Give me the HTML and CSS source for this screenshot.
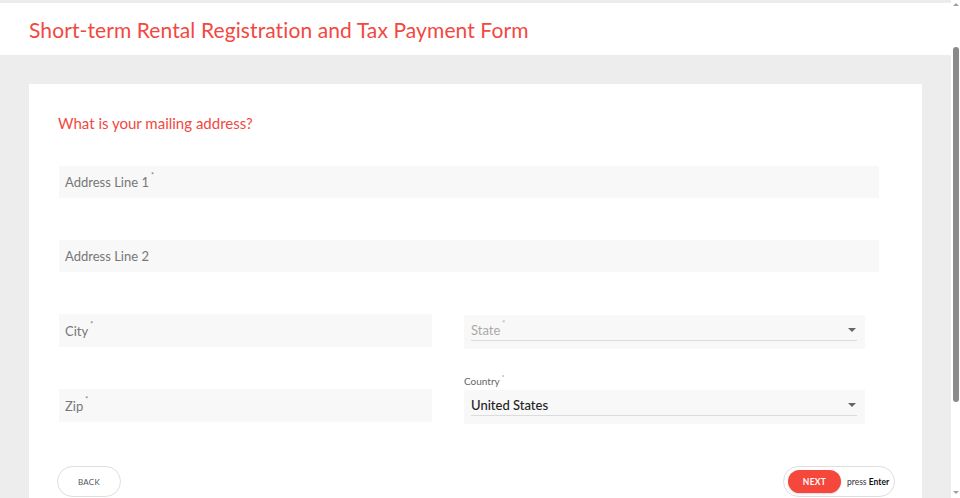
FILE: index.html
```html
<!DOCTYPE html>
<html>
<head>
<meta charset="utf-8">
<title>Short-term Rental Registration and Tax Payment Form</title>
<link rel="stylesheet" href="styles.css">
</head>
<body>
<div class="window">
  <div class="page">
    <header class="header">
      <h1 class="title">Short-term Rental Registration and Tax Payment Form</h1>
    </header>
    <main class="stage">
      <section class="card">
        <h2 class="question">What is your mailing address?</h2>
        <div class="fields">
          <div class="field full">
            <div class="input"><span class="ph">Address Line 1<sup>*</sup></span></div>
          </div>
          <div class="field full">
            <div class="input"><span class="ph">Address Line 2</span></div>
          </div>
          <div class="row">
            <div class="field left">
              <div class="input"><span class="ph">City<sup>*</sup></span></div>
            </div>
            <div class="field right">
              <div class="select">
                <div class="select-line">
                  <span class="ph light">State<sup>*</sup></span>
                  <span class="caret"></span>
                </div>
              </div>
            </div>
          </div>
          <div class="row zip-row">
            <div class="field left">
              <div class="input"><span class="ph">Zip<sup>*</sup></span></div>
            </div>
            <div class="field right">
              <div class="label">Country<sup>*</sup></div>
              <div class="select">
                <div class="select-line">
                  <span class="value">United States</span>
                  <span class="caret"></span>
                </div>
              </div>
            </div>
          </div>
        </div>
        <div class="actions">
          <button class="back">BACK</button>
          <div class="next-wrap">
            <button class="next">NEXT</button>
            <span class="hint">press <b>Enter</b></span>
          </div>
        </div>
      </section>
    </main>
  </div>
  <div class="scrollbar">
    <span class="arrow up"></span>
    <span class="thumb"></span>
    <span class="arrow down"></span>
  </div>
</div>
</body>
</html>
```

FILE: styles.css
```css
* { box-sizing: border-box; }
html, body { margin: 0; padding: 0; }
body {
  width: 960px;
  height: 498px;
  overflow: hidden;
  font-family: "Lato", "Noto Sans", sans-serif;
  background: #ededed;
}
.window {
  display: flex;
  height: 498px;
}
.page {
  flex: 1;
  display: flex;
  flex-direction: column;
  border-top: 3px solid #ececec;
  background: #ededed;
  overflow: hidden;
}
.header {
  flex: 0 0 52px;
  background: #fff;
  height: 52px;
  padding: 0 29px;
  display: flex;
  align-items: center;
}
.title {
  margin: 0;
  font-weight: 400;
  font-size: 21px;
  color: #f2483f;
  letter-spacing: 0.1px;
}
.stage {
  flex: 1 0 auto;
  padding: 29px 29px 0 29px;
  display: flex;
  flex-direction: column;
}
.card {
  flex: 1 0 auto;
  background: #fff;
  padding: 30px 43px 0 29px;
}
.question {
  margin: 0;
  font-size: 15px;
  font-weight: 400;
  color: #f2483f;
  height: 18px;
  line-height: 18px;
}
.fields {
  margin-top: 34px;
  padding-left: 1px;
  display: flex;
  flex-direction: column;
}
.field.full { margin-bottom: 42px; }
.input {
  background: #f8f8f8;
  height: 32px;
  display: flex;
  align-items: center;
  padding: 0 6px;
}
.left .input { height: 33px; }
.ph {
  font-size: 13px;
  color: #777;
}
.ph.light { color: #aaa; }
sup {
  font-size: 7px;
  vertical-align: top;
  position: relative;
  top: -3px;
  margin-left: 2px;
}
.row {
  display: grid;
  grid-template-columns: 373px 401px;
  column-gap: 32px;
}
.zip-row { margin-top: 26px; align-items: end; }
.zip-row .left { margin-bottom: 2px; }
.select {
  background: #f8f8f8;
  height: 34px;
  padding: 0 8px 0 7px;
  margin-top: 1px;
}
.select-line {
  height: 26px;
  border-bottom: 1px solid #dcdcdc;
  display: flex;
  align-items: flex-end;
  justify-content: space-between;
  padding-bottom: 2px;
}
.value {
  font-size: 13px;
  color: #222;
  font-weight: 500;
}
.caret {
  width: 0;
  height: 0;
  border-left: 4px solid transparent;
  border-right: 4px solid transparent;
  border-top: 4px solid #666;
  margin-bottom: 6px;
  margin-right: 1px;
}
.label {
  font-size: 10px;
  color: #666;
  height: 14px;
}
.label sup { top: -2px; font-size: 6px; }
.actions {
  margin-top: 42px;
  display: flex;
  justify-content: space-between;
  align-items: flex-start;
  margin-right: -16px;
  margin-left: -1px;
}
.back {
  width: 64px;
  height: 31px;
  border: 1px solid #dedede;
  border-radius: 16px;
  background: #fff;
  font-family: inherit;
  font-size: 8px;
  color: #555;
  letter-spacing: 0.3px;
  padding: 0;
}
.next-wrap {
  width: 112px;
  display: flex;
  align-items: center;
  gap: 6px;
  height: 31px;
  padding: 0 0 0 4px;
  border: 1px solid #dedede;
  border-radius: 16px;
  background: #fff;
}
.next {
  width: 53px;
  height: 23px;
  border: none;
  border-radius: 12px;
  background: #f5473b;
  color: #fff;
  font-family: inherit;
  font-weight: 700;
  font-size: 8.5px;
  letter-spacing: 0.3px;
  padding: 0;
  box-shadow: 0 1px 2px rgba(0,0,0,0.15);
}
.hint {
  font-size: 8.5px;
  color: #333;
  white-space: nowrap;
}
.hint b { color: #111; }
.scrollbar {
  width: 9px;
  background: #fff;
  display: flex;
  flex-direction: column;
  align-items: center;
}
.arrow {
  width: 0;
  height: 0;
  border-left: 3px solid transparent;
  border-right: 3px solid transparent;
}
.arrow.up { border-bottom: 3px solid #a0a0a0; margin-top: 3px; }
.arrow.down { border-top: 3px solid #a0a0a0; margin-top: auto; margin-bottom: 4px; }
.thumb {
  width: 6px;
  height: 355px;
  margin-top: 41px;
  background: #8a8a8a;
  border-radius: 3px;
}
```
